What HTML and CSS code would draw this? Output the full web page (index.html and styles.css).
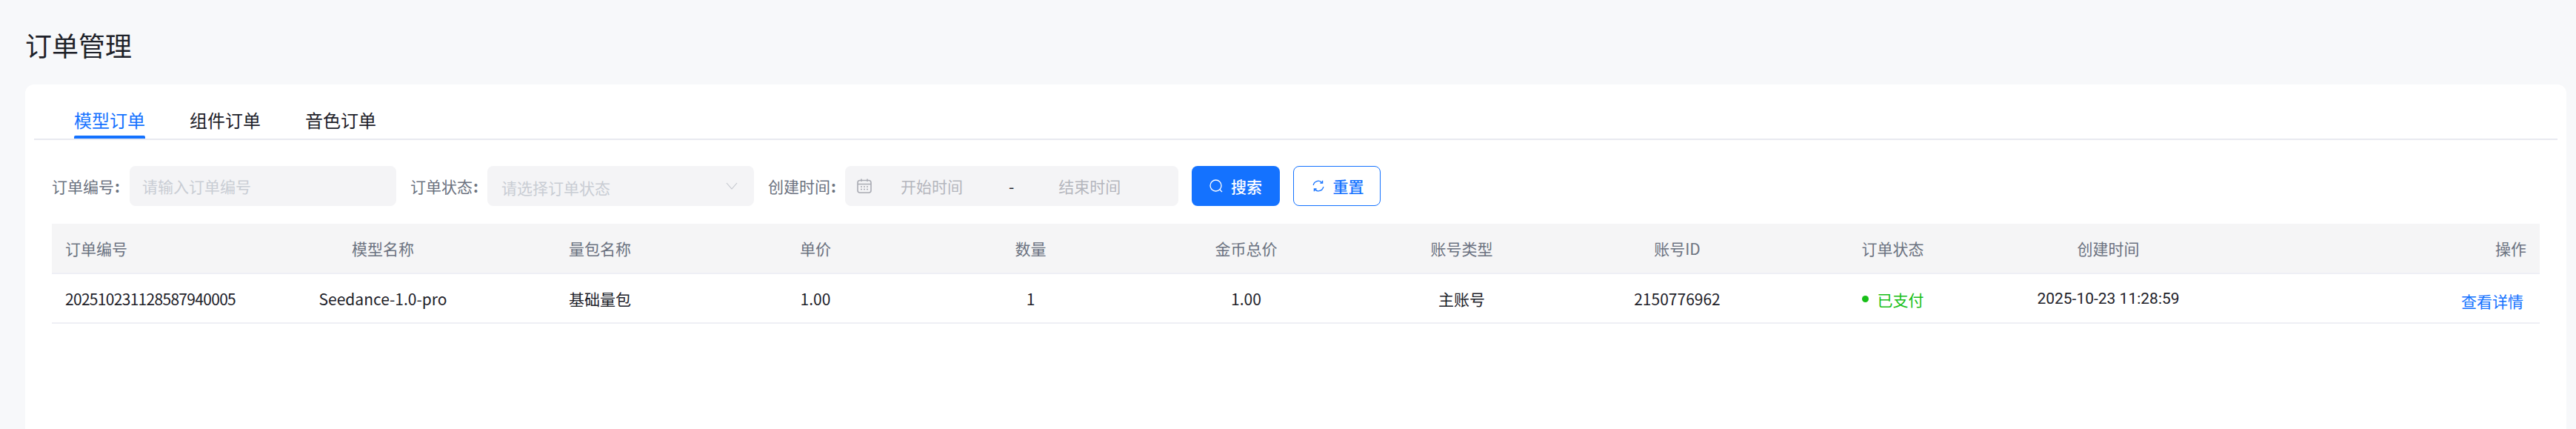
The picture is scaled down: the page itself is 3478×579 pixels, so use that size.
FILE: index.html
```html
<!DOCTYPE html>
<html lang="zh-CN">
<head>
<meta charset="utf-8">
<title>订单管理</title>
<link rel="stylesheet" href="styles.css">
</head>
<body>
<main class="page">
  <h1 class="title">订单管理</h1>
  <section class="card">
    <nav class="tabs">
      <a class="tab active">模型订单</a>
      <a class="tab">组件订单</a>
      <a class="tab">音色订单</a>
    </nav>
    <div class="content">
      <form class="filters">
        <label class="label">订单编号<span class="colon">:</span></label>
        <div class="field w360"><span class="ph">请输入订单编号</span></div>
        <label class="label l2">订单状态<span class="colon">:</span></label>
        <div class="field w360 select"><span class="ph">请选择订单状态</span>
          <svg class="chev" viewBox="0 0 16 10" width="16" height="10"><path d="M1 1 8 9l7-8" fill="none" stroke="#c2c5cc" stroke-width="1.100"/></svg>
        </div>
        <label class="label l2">创建时间<span class="colon">:</span></label>
        <div class="field date">
          <svg class="cal" viewBox="0 0 20 20" width="20" height="20" fill="none" stroke="#a9abb3" stroke-width="1.600"><rect x="1" y="2.500" width="18" height="16.500" rx="3"/><path d="M1 7.500h18M6 .5v3.500M14 .5v3.500"/><path d="M5 11h2M9 11h2M13 11h2M5 14.500h2M9 14.500h2M13 14.500h2" stroke-width="1.400"/></svg>
          <span class="ph ds">开始时间</span>
          <span class="dash">-</span>
          <span class="ph de">结束时间</span>
        </div>
        <button type="button" class="btn primary">
          <svg viewBox="0 0 18 18" width="18" height="18" fill="none" stroke="#fff" stroke-width="1.300"><circle cx="8.500" cy="8.500" r="7.500"/><path d="m14 14 3 3"/></svg>
          搜索
        </button>
        <button type="button" class="btn ghost">
          <svg viewBox="0 0 16 16" width="16" height="16" fill="none" stroke="#1472ff" stroke-width="1.300"><path d="M1.200 7A6.800 6.800 0 0 1 13 3.500"/><path d="M13.600 .8v3.200h-3.200"/><path d="M14.800 9A6.800 6.800 0 0 1 3 12.500"/><path d="M2.400 15.200V12h3.200"/></svg>
          重置
        </button>
      </form>
      <table class="orders">
        <thead>
          <tr>
            <th class="c1 left">订单编号</th><th class="c2">模型名称</th><th class="c3">量包名称</th><th class="c4">单价</th><th class="c5">数量</th><th class="c6">金币总价</th><th class="c7">账号类型</th><th class="c8">账号ID</th><th class="c9">订单状态</th><th class="c10">创建时间</th><th class="c11 right">操作</th>
          </tr>
        </thead>
        <tbody>
          <tr>
            <td class="left order-no">202510231128587940005</td><td>Seedance-1.0-pro</td><td>基础量包</td><td>1.00</td><td>1</td><td>1.00</td><td>主账号</td><td>2150776962</td>
            <td><span class="status"><i class="dot"></i>已支付</span></td>
            <td class="datetime">2025-10-23 11:28:59</td>
            <td class="right"><a class="link">查看详情</a></td>
          </tr>
        </tbody>
      </table>
    </div>
  </section>
</main>
</body>
</html>
```
FILE: styles.css
```css
* { box-sizing: border-box; }
html, body { margin: 0; height: 100%; }
body {
  background: #f7f8fa;
  font-family: "Noto Sans CJK SC", "Noto Sans", sans-serif;
  font-size: 21px;
  color: #1d2129;
  overflow: hidden;
}
.page { padding: 0 13px 0 34px; height: 579px; display: flex; flex-direction: column; }
.title {
  margin: 0;
  height: 114px;
  padding-top: 34px;
  font-size: 36px;
  font-weight: 400;
  line-height: 52px;
  color: #1d2129;
}
.card {
  flex: 1;
  background: #fff;
  border-radius: 12px 12px 0 0;
  padding: 0 12px;
}
.tabs {
  display: flex;
  gap: 60px;
  height: 75px;
  padding: 30px 0 0 54px;
  border-bottom: 2px solid #e8e9f0;
}
.tab {
  position: relative;
  font-size: 24px;
  line-height: 35px;
  height: 43px;
  color: #1d2129;
}
.tab.active { color: #1472ff; }
.tab.active::after {
  content: "";
  position: absolute;
  left: 0;
  right: 0;
  bottom: 0;
  height: 4px;
  border-radius: 2px 2px 0 0;
  background: #1472ff;
}
.content { padding: 35px 24px 0; }
.filters { display: flex; align-items: center; height: 54px; }
.label { color: #6b7280; width: 105px; line-height: 30px; flex: none; }
.label.l2 { margin-left: 19px; width: 104px; }
.colon { margin-left: 1px; font-weight: 700; }
.field {
  position: relative;
  display: flex;
  align-items: center;
  height: 54px;
  flex: none;
  background: #f4f4f6;
  border-radius: 8px;
  padding-left: 17px;
}
.w360 { width: 360px; }
.date { width: 450px; margin-right: 18px; padding-left: 16px; }
.ph { color: #c9cdd4; }
.select { justify-content: space-between; padding: 3px 22px 0 19px; }
.chev { margin-top: -3px; }
.cal { flex: none; }
.ds, .de { color: #b4b6bd; }
.ds { margin-left: 39px; }
.dash { margin-left: 62px; color: #1d2129; }
.de { margin-left: 60px; }
.btn {
  display: flex;
  align-items: center;
  justify-content: center;
  gap: 11px;
  height: 54px;
  border-radius: 8px;
  font: 500 21px "Noto Sans CJK SC", sans-serif;
  flex: none;
  padding: 0;
}
.primary { width: 119px; background: #1472ff; color: #fff; border: 0; }
.ghost { width: 118px; margin-left: 18px; padding-left: 3px; gap: 12px; background: #fff; color: #1472ff; border: 1.5px solid #1472ff; }
.orders {
  width: 100%;
  margin-top: 24px;
  table-layout: fixed;
  border-collapse: collapse;
  text-align: center;
}
.orders th {
  height: 67px;
  padding: 0;
  background: #f5f5f6;
  border-bottom: 2px solid #eeeff5;
  font-weight: 400;
  color: #6b7280;
}
.orders td {
  height: 67px;
  padding: 0;
  border-bottom: 2px solid #eeeff5;
  color: #1d2129;
}
.orders .left { text-align: left; padding-left: 18px; }
.orders .right { text-align: right; padding-right: 18px; }
.orders .order-no { letter-spacing: -0.7px; }
.orders .datetime { font-family: Roboto, "Noto Sans CJK SC", sans-serif; }
.c1 { width: 300px; }
.c2 { width: 294px; }
.c3 { width: 292px; }
.c4 { width: 290px; }
.c5, .c6, .c7, .c8, .c9, .c10 { width: 291px; }
.c11 { width: auto; }
.status { display: inline-flex; align-items: center; gap: 12px; color: #17bf17; vertical-align: 2px; }
.dot { width: 9px; height: 9px; border-radius: 50%; background: #17bf17; }
.link { color: #1472ff; padding-right: 4px; position: relative; top: 3px; }
```
